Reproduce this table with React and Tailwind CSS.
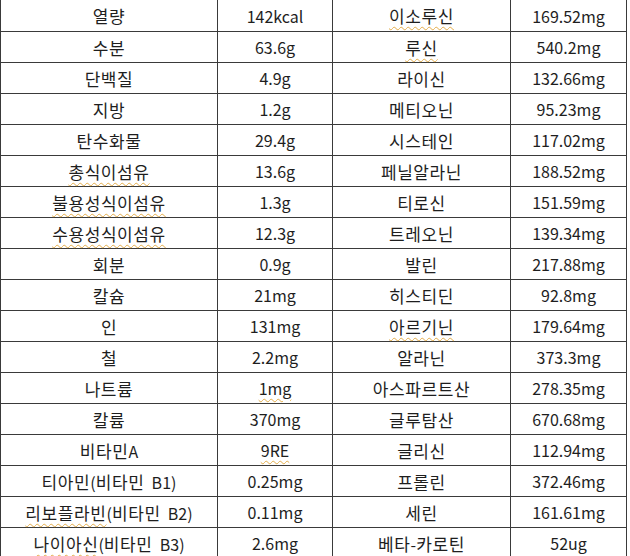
const rows = [
  ['열량', '142kcal', '이소루신', '169.52mg'],
  ['수분', '63.6g', '루신', '540.2mg'],
  ['단백질', '4.9g', '라이신', '132.66mg'],
  ['지방', '1.2g', '메티오닌', '95.23mg'],
  ['탄수화물', '29.4g', '시스테인', '117.02mg'],
  ['총식이섬유', '13.6g', '페닐알라닌', '188.52mg'],
  ['불용성식이섬유', '1.3g', '티로신', '151.59mg'],
  ['수용성식이섬유', '12.3g', '트레오닌', '139.34mg'],
  ['회분', '0.9g', '발린', '217.88mg'],
  ['칼슘', '21mg', '히스티딘', '92.8mg'],
  ['인', '131mg', '아르기닌', '179.64mg'],
  ['철', '2.2mg', '알라닌', '373.3mg'],
  ['나트륨', '1mg', '아스파르트산', '278.35mg'],
  ['칼륨', '370mg', '글루탐산', '670.68mg'],
  ['비타민A', '9RE', '글리신', '112.94mg'],
  ['티아민(비타민  B1)', '0.25mg', '프롤린', '372.46mg'],
  ['리보플라빈(비타민  B2)', '0.11mg', '세린', '161.61mg'],
  ['나이아신(비타민  B3)', '2.6mg', '베타-카로틴', '52ug'],
];

// words the spell checker flagged in the source document
const flagged = ['이소루신', '루신', '총식이섬유', '불용성식이섬유', '수용성식이섬유', '아르기닌', '1mg', '9RE', '리보플라빈', '나이아신'];

// hangul runs get a slightly bigger, wider setting than latin/digits
function Runs({ text }) {
  const parts = text.match(/[\uac00-\ud7a3]+|[^\uac00-\ud7a3]+/g) || [];
  return parts.map((p, i) =>
    /[\uac00-\ud7a3]/.test(p) ? (
      <span key={i} className="text-[17px] tracking-[0.6px]">{p}</span>
    ) : (
      <span key={i} className="text-[16px]">{p}</span>
    )
  );
}

function Cell({ text }) {
  const word = flagged.find((w) => text === w || text.startsWith(w + '('));
  if (!word) return <span className="whitespace-pre"><Runs text={text} /></span>;
  return (
    <span className="whitespace-pre">
      <span className="underline decoration-wavy decoration-[#e3ad4a] decoration-1 underline-offset-[3px]">
        <Runs text={word} />
      </span>
      <Runs text={text.slice(word.length)} />
    </span>
  );
}

export default function App() {
  return (
    <div className="h-screen w-full overflow-hidden bg-white">
      <div
        className="w-[627px] border-l border-[#3a3a3a] leading-none text-[#1e1e1e]"
        style={{ fontFamily: '"Noto Sans CJK KR", "Noto Sans", sans-serif' }}
      >
        {rows.map((r, i) => (
          <div
            key={i}
            className={`grid grid-cols-[217px_115px_178px_116px] ${i === 0 ? 'h-[32px]' : 'h-[31px]'}`}
          >
            {r.map((c, j) => (
              <div key={j} className="flex items-center justify-center border-r border-b border-[#3a3a3a]">
                <Cell text={c} />
              </div>
            ))}
          </div>
        ))}
      </div>
    </div>
  );
}
